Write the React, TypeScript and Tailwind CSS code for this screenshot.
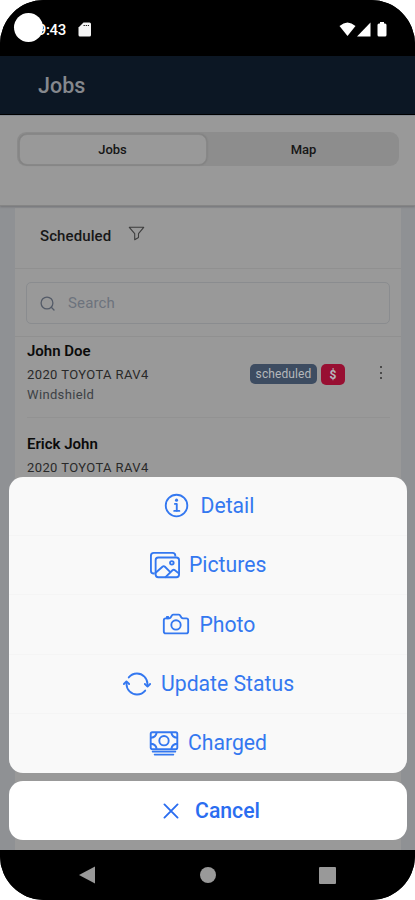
import React from 'react';
import {
  IoInformationCircleOutline,
  IoImagesOutline,
  IoCameraOutline,
  IoSyncOutline,
  IoCloseOutline,
} from 'react-icons/io5';
import clsx from 'clsx';

const CashIcon: React.FC<{ size: number; className?: string }> = ({ size, className }) => (
  <svg width={size} height={size} viewBox="0 0 30 30" fill="none" stroke="currentColor" className={className}>
    <rect x="1.7" y="4.2" width="26.6" height="17" rx="1.6" strokeWidth="1.9" />
    <circle cx="15" cy="12.7" r="4.7" strokeWidth="1.9" />
    <path d="M2 9.7Q7 9.2 7.6 4.6M28 9.7Q23 9.2 22.4 4.6M2 15.7Q7 16.2 7.6 20.8M28 15.7Q23 16.2 22.4 20.8" strokeWidth="2" />
    <path d="M3.6 23.6H26.4M5.6 26.6H24.4" strokeWidth="1.7" strokeLinecap="round" />
  </svg>
);

const actions = [
  { label: 'Detail', icon: IoInformationCircleOutline, text: 'w-[54px]' },
  { label: 'Pictures', icon: IoImagesOutline, text: 'w-[77px]' },
  { label: 'Photo', icon: IoCameraOutline, text: 'w-[56px]' },
  { label: 'Update Status', icon: IoSyncOutline, text: 'w-[133px]' },
  { label: 'Charged', icon: CashIcon, text: 'w-[79px]' },
];

const StatusBar: React.FC = () => (
  <div className="relative flex h-14 shrink-0 items-start justify-between bg-black pl-[35px] pr-[27px] pt-[21px] text-white">
    <div className="flex items-start">
      <span className="w-[31px] whitespace-nowrap text-right text-[15px] font-medium leading-[19px] tracking-[-0.3px]">
        <span className="float-right">9:43</span>
      </span>
      <svg width="14" height="16" viewBox="0 0 14 16" className="ml-[12px] mt-px">
        <path d="M5.5 0.5H11.5Q13 0.5 13 2V13Q13 14.5 11.5 14.5H2Q0.5 14.5 0.5 13V5.5Z" fill="#f4f4f4" />
        <path d="M5.5 3.5H11" stroke="#222" strokeWidth="1.2" strokeDasharray="1.4 .8" />
      </svg>
    </div>
    <svg width="50" height="16" viewBox="0 0 50 16" fill="#fff">
      <path d="M1.5 5Q9.5 -2 17.5 5L9.5 15Z" />
      <path d="M32.5 1.5V15.5H19Z" />
      <path d="M42 1H46V2.5H47Q48.5 2.5 48.5 4V14Q48.5 15.5 47 15.5H41Q39.5 15.5 39.5 14V4Q39.5 2.5 41 2.5H42Z" />
    </svg>
    {/* Camera cutout */}
    <div className="absolute left-[14px] top-[13px] size-[29px] rounded-full bg-white" />
  </div>
);

const Segment: React.FC = () => (
  <div className="mx-auto flex h-[34px] w-[382px] items-center rounded-[9px] bg-[#8d8d8d] p-[2px] pr-0 text-[13px] font-medium text-[#161616]">
    <div className="flex h-[31px] w-[188px] items-center justify-center rounded-[8px] border border-[#888] bg-[#999] pt-[2px] shadow-[0_0_2px_rgba(0,0,0,0.18)]">
      Jobs
    </div>
    <div className="flex-1 pl-[2px] pt-[2px] text-center">Map</div>
  </div>
);

const JobRow: React.FC<{ name: string; service?: string }> = ({ name, service }) => (
  <div className="ml-3 mr-[11px] flex h-[93px] justify-between border-b border-[#929292]">
    <div className="pt-[15px]">
      <div className="text-[15px] font-semibold leading-[22px] text-[#0b0b0b]">{name}</div>
      <div className="pt-[3px] text-[13px] leading-5 tracking-[0.4px] text-[#292929]">2020 TOYOTA RAV4</div>
      {service && <div className="text-[13px] leading-5 tracking-[0.35px] text-[#3d4246]">{service}</div>}
    </div>
    {service && (
      <div className="flex h-5 pt-[39px] text-[#b5b8bb]">
        <span className="flex h-5 w-[67px] items-center justify-center rounded-[5px] bg-[#3d4c61] text-[12px] tracking-[0.1px]">
          scheduled
        </span>
        <span className="ml-[4px] flex h-[21px] w-6 items-center justify-center rounded-[5px] bg-[#980f32] text-[12px] font-bold">
          $
        </span>
        <span className="ml-[35px] mr-[8px] mt-[2px] flex h-[13px] flex-col justify-between">
          <i className="size-[2px] bg-[#4a4a4a]" />
          <i className="size-[2px] bg-[#4a4a4a]" />
          <i className="size-[2px] bg-[#4a4a4a]" />
        </span>
      </div>
    )}
  </div>
);

const JobsPage: React.FC = () => (
  <div className="h-[735px] overflow-hidden bg-[#8f9194]">
    <div className="relative h-[91px] border-b border-[#858585] border-t border-t-[#858a91] bg-[#999] pt-[16px] shadow-[0_1px_2px_rgba(0,0,0,0.2)]">
      <Segment />
    </div>
    <div className="ml-[15px] mr-[14px] mt-[2px] h-[643px] bg-[#999]">
      <div className="flex h-[61px] items-start border-b border-[#909090] pl-[25px]">
        <h2 className="w-[71px] whitespace-nowrap pt-[17px] text-[15px] font-medium leading-[22px] tracking-[0.1px] text-[#171717]">
          Scheduled
        </h2>
        <svg width="17" height="16" viewBox="0 0 17 16" fill="none" stroke="#3d3d3d" strokeWidth="1.1" className="ml-[17px] mt-[18px]">
          <path d="M1.3 1.3H15.7L10.5 7.7V11.5L6.7 13.7V7.7Z" strokeLinejoin="round" />
        </svg>
      </div>
      <div className="h-[68px] border-b border-[#909090] px-[11px] pt-[13px]">
        <div className="flex h-[42px] items-center rounded-[5px] border border-[#8a8c8f] pl-[12px] text-[15px] tracking-[0.15px] text-[#6d737d]">
          <svg width="17" height="17" viewBox="0 0 17 17" fill="none" stroke="#545b68" strokeWidth="1.3" strokeLinecap="round">
            <circle cx="8" cy="8" r="5.9" />
            <path d="M12.3 12.3L15 15" />
          </svg>
          <span className="ml-[12px]">Search</span>
        </div>
      </div>
      <div className="-mt-[13px] pt-px">
        <JobRow name="John Doe" service="Windshield" />
        <JobRow name="Erick John" />
      </div>
    </div>
  </div>
);

const ActionSheet: React.FC = () => (
  <div className="absolute bottom-[60px] left-[9px] right-2 text-[21.2px] text-[#3478f0]">
    <div className="h-[296px] overflow-hidden rounded-[14px] bg-[#f9f9f9]">
      {actions.map(({ label, icon: Icon, text }, i) => (
        <button
          key={label}
          className={clsx(
            'flex h-[59.2px] w-full items-center justify-center gap-[9px]',
            i < actions.length - 1 && 'border-b border-[#f5f5f5]'
          )}
        >
          <Icon size={30} className="shrink-0" />
          <span className={clsx('whitespace-nowrap text-left', text)}>{label}</span>
        </button>
      ))}
    </div>
    <button className="mt-2 flex h-[59px] w-full items-center justify-center gap-[9px] rounded-[14px] bg-white font-medium text-[#2a6df0]">
      <IoCloseOutline size={30} />
      <span>Cancel</span>
    </button>
  </div>
);

const NavBar: React.FC = () => (
  <div className="flex h-[50px] items-center justify-between bg-black pl-[78px] pr-[79px]">
    <svg width="18" height="18" viewBox="0 0 18 18" fill="#999">
      <path d="M1 9L17 0.5V17.5Z" />
    </svg>
    <div className="size-4 rounded-full bg-[#999]" />
    <div className="size-[17px] rounded-[1px] bg-[#999]" />
  </div>
);

const App: React.FC = () => (
  <div className="h-[900px] w-[415px] overflow-hidden bg-white font-['Roboto',sans-serif]">
    <div className="relative h-[900px] overflow-hidden rounded-[44px] bg-black">
      <StatusBar />
      <header className="flex h-[59px] items-center border-b border-black bg-[#0c1724] pl-[38px] pt-[3px] text-[21.5px] font-medium text-[#85888d]">
        Jobs
      </header>
      <JobsPage />
      <NavBar />
      <ActionSheet />
    </div>
  </div>
);

export default App;
